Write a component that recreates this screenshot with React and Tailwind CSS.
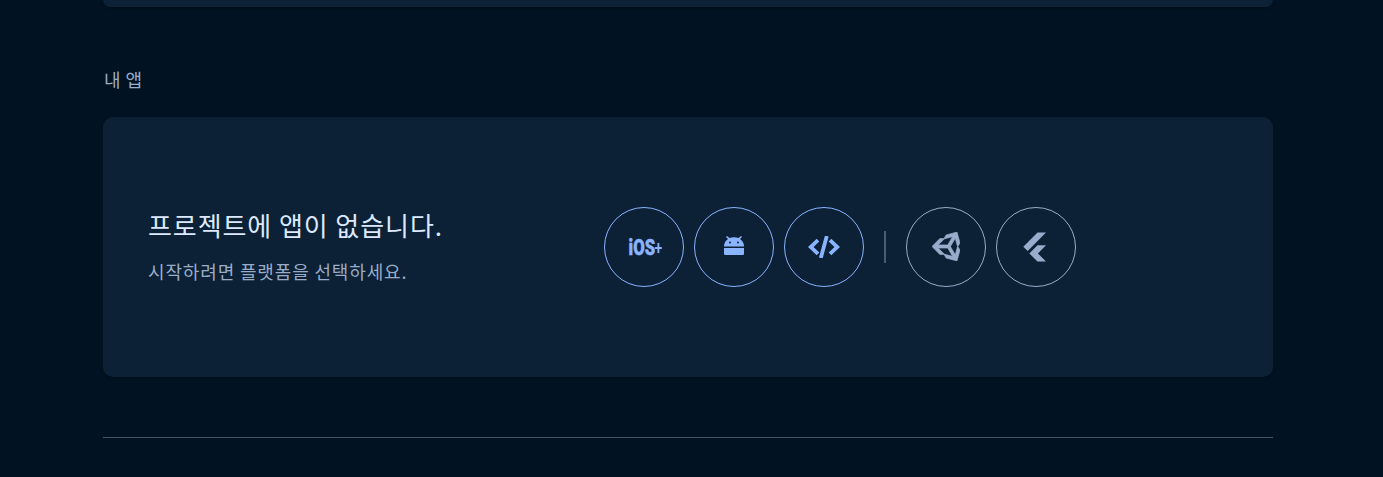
const platforms = [
  {
    name: 'iOS+',
    icon: (
      <svg width="40" height="32" viewBox="0 0 40 32" fill="currentColor" className="ml-1 shrink-0 overflow-visible font-['Roboto'] font-black">
        <text transform="translate(2.6 24.2) scale(0.74 1)" fontSize="22.5" stroke="currentColor" strokeWidth="0.5">
          iOS<tspan dx="-0.8" dy="-1.2" fontSize="19" fontWeight="600" stroke="none">+</tspan>
        </text>
      </svg>
    ),
  },
  {
    name: 'Android',
    icon: (
      <svg width="20" height="20" viewBox="0 0 20 20" fill="currentColor" className="-mt-0.5">
        <path fillRule="evenodd" d="M0 10.5V10A9.6 9.2 0 0 1 4 2.9L2 1L3 0L5.5 2.1A11 10 0 0 1 14.5 2.1L17 0L18 1L16 2.9A9.6 9.2 0 0 1 20 10V10.5ZM6 5.6a1 1 0 1 0 0 2a1 1 0 1 0 0-2ZM14 5.6a1 1 0 1 0 0 2a1 1 0 1 0 0-2Z" />
        <path d="M0 12H20V17.7Q20 19 18.7 19H1.3Q0 19 0 17.7Z" />
      </svg>
    ),
  },
  {
    name: 'Web',
    icon: (
      <svg width="32" height="22" viewBox="0 0 32 22" fill="none" stroke="currentColor" strokeWidth="3.8">
        <path d="M10 4.2L2.7 11L10 17.8M22 4.2L29.3 11L22 17.8M18.8 0L12.8 22" />
      </svg>
    ),
  },
];

const frameworks = [
  {
    name: 'Unity',
    icon: (
      <svg width="28" height="29" viewBox="1.59 3 17.49 18" fill="currentColor" stroke="currentColor" strokeWidth="0.4" className="-mt-px">
        <path d="M9.11,17H6.5L1.59,12L6.5,7H9.11L10.42,4.74L17.21,3L19.08,9.74L17.77,12L19.08,14.26L17.21,21L10.42,19.26L9.11,17M9.25,16.75L14.38,18.13L11.42,13H5.5L9.25,16.75M16.12,17.13L17.5,12L16.12,6.87L13.15,12L16.12,17.13M9.25,7.25L5.5,11H11.42L14.38,5.87L9.25,7.25Z" />
      </svg>
    ),
  },
  {
    name: 'Flutter',
    icon: (
      <svg width="24" height="30" viewBox="0 0 24 30" fill="currentColor" className="mr-[3px]">
        <path d="M14.5 0.5H23L4.7 19L0.3 14.8ZM14.5 13.2H23L14.9 21.4L23 29.6H14.5L6.3 21.4Z" />
      </svg>
    ),
  },
];

function PlatformButton({ item, className }) {
  return (
    <button aria-label={item.name} className={`flex size-20 items-center justify-center rounded-full border ${className}`}>
      {item.icon}
    </button>
  );
}

export default function App() {
  return (
    <main className="flex h-[477px] flex-col overflow-hidden bg-[#011322] pr-[110px] pl-[103px] font-['Noto_Sans_CJK_KR','Noto_Sans',sans-serif]">
      <div className="h-[7px] shrink-0 rounded-b-[10px] bg-[#0c2135] shadow-[0_2px_3px_rgba(0,0,0,0.25)]" />
      <h2 className="mt-[57px] h-[30px] pl-px text-[18px] leading-[30px] font-normal tracking-[0.5px] text-[#9aacc8]">내 앱</h2>
      <section className="mt-[23px] flex h-[260px] shrink-0 items-center rounded-[10px] bg-[#0c2135] pl-[45px] shadow-[0_2px_3px_rgba(0,0,0,0.25)]">
        <div className="-mt-[3px] w-[456px]">
          <h3 className="text-[26px] leading-[40px] font-normal tracking-[0.92px] text-[#dce9ff]">프로젝트에 앱이 없습니다.</h3>
          <p className="mt-[11px] text-[18px] leading-[30px] tracking-[0.85px] text-[#9aacc8]">시작하려면 플랫폼을 선택하세요.</p>
        </div>
        <div className="flex items-center gap-2.5">
          {platforms.map((p) => (
            <PlatformButton key={p.name} item={p} className="border-[#8ab4ff] text-[#8ab4ff]" />
          ))}
          <div className="mx-2.5 h-8 w-0.5 bg-[#4a5c72]" />
          {frameworks.map((f) => (
            <PlatformButton key={f.name} item={f} className="border-[#9aaccb] text-[#9aaccb]" />
          ))}
        </div>
      </section>
      <hr className="mt-[60px] border-[#455464]" />
    </main>
  );
}
